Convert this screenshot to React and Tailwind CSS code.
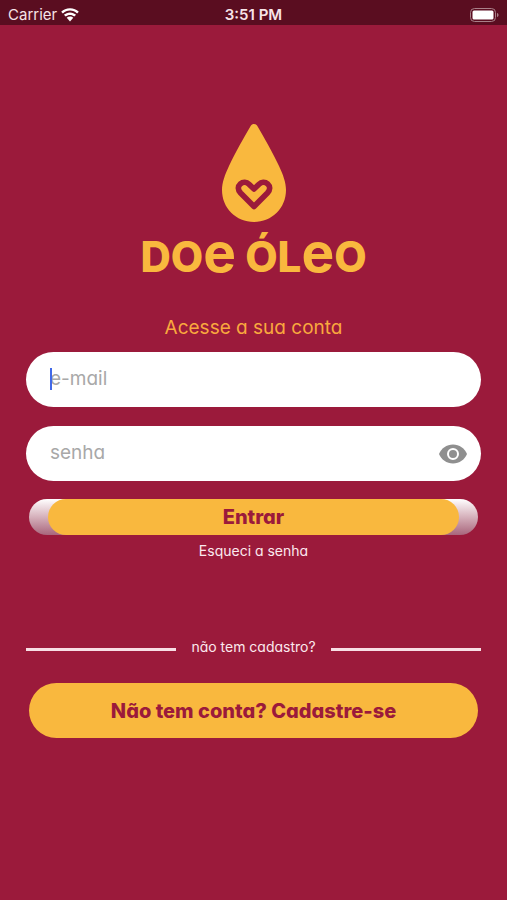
import { useState } from 'react'

function StatusBar() {
  return (
    <div className="grid h-[25px] grid-cols-3 items-center bg-[#5a0d20] px-2 pt-1 text-[15px] leading-5 text-[#f6e3e7]">
      <div className="flex items-center gap-1">
        <span>Carrier</span>
        <svg viewBox="0 0 18 14" className="h-[14px] w-[18px] fill-white">
          <path d="M9 0.2C5.500 0.200 2.400 1.500 0.200 3.700L1.900 5.500C3.700 3.700 6.200 2.600 9 2.600s5.300 1.100 7.100 2.900l1.700-1.800C15.600 1.500 12.500 0.200 9 0.200z" />
          <path d="M9 4.400c-2.400 0-4.500 0.900-6.100 2.400l1.800 1.800C5.800 7.500 7.300 6.900 9 6.900s3.200 0.600 4.300 1.700l1.800-1.800C13.500 5.300 11.400 4.400 9 4.400z" />
          <path d="M9 8.600c-1.300 0-2.400 0.500-3.300 1.200L9 13.400l3.300-3.600C11.400 9.100 10.300 8.600 9 8.600z" />
        </svg>
      </div>
      <span className="text-center font-semibold">3:51 PM</span>
      <svg viewBox="0 0 30 14" className="h-[14px] w-[30px] justify-self-end">
        <rect x="1.500" y="0.500" width="25" height="13" rx="4" fill="none" stroke="#a98089" />
        <rect x="3.500" y="2.500" width="21" height="9" rx="1.500" fill="#ffffff" />
        <path d="M28 5v4c1-0.300 1.500-1.100 1.500-2S29 5.300 28 5z" fill="#a98089" />
      </svg>
    </div>
  )
}

function Logo() {
  return (
    <div className="flex flex-col items-center text-[#f9b83e]">
      <svg viewBox="0 0 64 98" className="h-[98px] w-[64px]">
        <path
          d="M28.800 1.800C30.200-0.600 33.800-0.600 35.200 1.800C42 13.500 50.500 28 57 42C61 50.500 64 58.500 64 66C64 84 50 98 32 98S0 84 0 66C0 58.500 3 50.500 7 42C13.500 28 22 13.500 28.800 1.800z"
          fill="currentColor"
        />
        <path
          d="M32 82.500L18.600 69C15.600 65.800 15.600 62.300 18.400 59.800C21 57.500 24.600 57.800 27 60.200L32 65L37 60.200C39.400 57.800 43 57.500 45.600 59.800C48.400 62.300 48.400 65.800 45.400 69z"
          fill="none"
          stroke="#9b1a3b"
          strokeWidth="5.600"
          strokeLinejoin="round"
        />
      </svg>
      <h1 className="mt-[6px] flex h-[46px] items-baseline text-[42px] leading-[48px] font-extrabold whitespace-pre">
        DO<span className="text-[55px] font-bold">e</span> ÓL
        <span className="text-[55px] font-bold">e</span>O
      </h1>
    </div>
  )
}

function App() {
  const [email, setEmail] = useState('')
  const [senha, setSenha] = useState('')
  const [showSenha, setShowSenha] = useState(false)

  return (
    <div className="min-h-screen bg-[#9b1a3b] font-['Inter',sans-serif]">
      <StatusBar />

      <main className="px-[26px] pt-[99px] pb-8 [font-feature-settings:'cv11']">
        <Logo />

        <form onSubmit={(e) => e.preventDefault()} className="mt-10 flex flex-col">
          <h2 className="text-center text-[19px] leading-7 text-[#f9a83e]">Acesse a sua conta</h2>

          {/* E-mail */}
          <div className="relative mt-[10px]">
            <input
              type="email"
              aria-label="e-mail"
              placeholder="e-mail"
              value={email}
              onChange={(e) => setEmail(e.target.value)}
              className="h-[55px] w-full rounded-full bg-white px-6 pb-[2px] text-[19px] text-gray-800 placeholder-[#a8a8a8] focus:outline-none"
            />
            {!email && <span className="absolute top-4 left-6 h-[22px] w-[2px] bg-[#4169e8]" />}
          </div>

          {/* Senha */}
          <div className="relative mt-[19px]">
            <input
              type={showSenha ? 'text' : 'password'}
              aria-label="senha"
              placeholder="senha"
              value={senha}
              onChange={(e) => setSenha(e.target.value)}
              className="h-[55px] w-full rounded-full bg-white pr-14 pb-[2px] pl-6 text-[19px] text-gray-800 placeholder-[#a8a8a8] focus:outline-none"
            />
            <button
              type="button"
              aria-label="Mostrar senha"
              onClick={() => setShowSenha(!showSenha)}
              className="absolute inset-y-0 right-[14px] flex items-center"
            >
              <svg viewBox="0 0 28 20" className="h-5 w-7">
                <path d="M14 0.500C7.600 0.500 2.200 4.400 0 10c2.200 5.600 7.600 9.500 14 9.500S25.800 15.600 28 10C25.800 4.400 20.400 0.500 14 0.500z" fill="#8f8f8f" />
                <circle cx="14" cy="10" r="5" fill="#8f8f8f" stroke="#ffffff" strokeWidth="2" />
              </svg>
            </button>
          </div>

          <div className="mx-[3px] mt-[18px] rounded-full bg-linear-to-b from-white to-[#a8667c] px-[19px]">
            <button type="submit" className="h-9 w-full rounded-full bg-[#f9b83e] text-xl font-extrabold text-[#9b1a3b]">
              Entrar
            </button>
          </div>

          <a href="#" className="mt-[6px] self-center text-sm leading-5 text-[#fbe9ee]">
            Esqueci a senha
          </a>
        </form>

        {/* Cadastro */}
        <div className="mt-[76px] flex items-center gap-[15px]">
          <span className="h-[3px] flex-1 bg-[#f8dfe5]" />
          <span className="pb-1 text-sm leading-5 text-[#fbe9ee]">não tem cadastro?</span>
          <span className="h-[3px] flex-1 bg-[#f8dfe5]" />
        </div>

        <div className="mx-[3px] mt-[22px]">
          <button type="button" className="h-[55px] w-full rounded-full bg-[#f9b83e] text-xl font-extrabold text-[#9b1a3b]">
            Não tem conta? Cadastre-se
          </button>
        </div>
      </main>
    </div>
  )
}

export default App
